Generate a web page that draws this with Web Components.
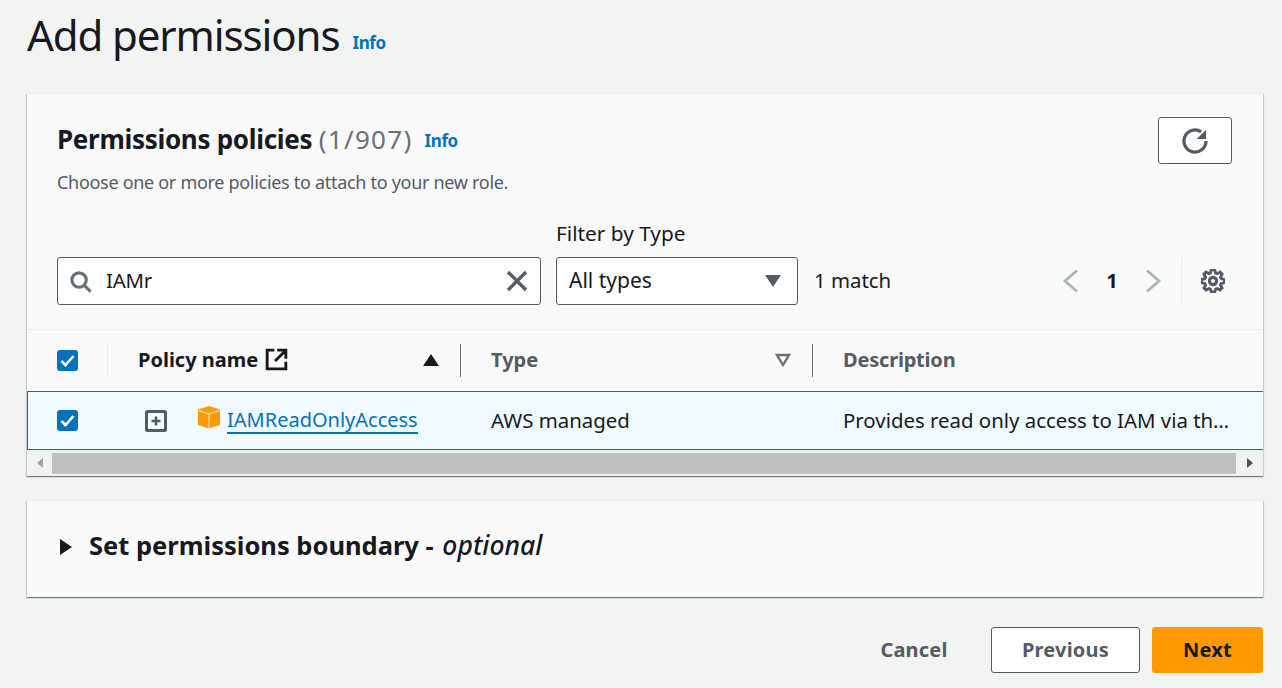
<!DOCTYPE html>
<html>
<head>
<meta charset="utf-8">
<title>Add permissions</title>
<style>
  html, body { margin: 0; height: 100%; overflow: hidden; background: #f2f3f3; }
  body { font-family: "Noto Sans", "Liberation Sans", sans-serif; color: #16191f; }
</style>
</head>
<body>
<add-permissions-page></add-permissions-page>

<script>
const ICONS = {
  search: `<svg viewBox="0 0 16 16"><circle cx="7" cy="7" r="5"/><path d="M15 15l-4.500-4.500"/></svg>`,
  close: `<svg viewBox="0 0 16 16"><path d="M2 2l12 12M14 2L2 14"/></svg>`,
  refresh: `<svg viewBox="0 0 16 16"><path d="M14.800 8a6.800 6.800 0 1 1-3-5.600"/><path d="M14.800 1v5.800H9z" fill="#545b64" stroke="none"/></svg>`,
  settings: `<svg viewBox="0 0 16 16"><path d="M13.300 5.200l1.100-2.100L13 1.700l-2.100 1.100-1-.4L9.100 0H6.900l-.8 2.300-1 .4L3 1.700 1.600 3.100l1.100 2.100-.4 1L0 6.900v2.200l2.300.8.4 1L1.600 13 3 14.400l2.100-1.100 1 .4.8 2.300h2.200l.8-2.300 1-.4 2.100 1.100 1.400-1.400-1.100-2.100.4-1 2.300-.8V6.900l-2.300-.8z" transform="translate(.5 .5) scale(.94)"/><circle cx="8" cy="8" r="2.400"/></svg>`,
  left: `<svg viewBox="0 0 16 16"><path d="M12 1L4 8l8 7"/></svg>`,
  right: `<svg viewBox="0 0 16 16"><path d="M4 1l8 7-8 7"/></svg>`,
  external: `<svg viewBox="0 0 16 16"><path d="M6.500 1.500h-5v13h13v-5"/><path d="M8.500 1.500h6v6M14.500 1.500L7 9"/></svg>`,
};

class InfoLink extends HTMLElement {
  connectedCallback() {
    this.attachShadow({ mode: "open" }).innerHTML = `
      <style>
        :host { display: inline-block; color: #0073bb; font-size: 17px; line-height: 22px; font-weight: 700; letter-spacing: -.4px; }
      </style>
      <slot></slot>`;
  }
}
customElements.define("info-link", InfoLink);

class CheckBox extends HTMLElement {
  connectedCallback() {
    this.attachShadow({ mode: "open" }).innerHTML = `
      <style>
        :host { display: block; width: 21px; height: 21px; background: #0073bb; border-radius: 3px; }
        svg { display: block; width: 21px; height: 21px; fill: none; stroke: #fff; stroke-width: 2.600; }
      </style>
      <svg viewBox="0 0 21 21"><path d="M4.500 11l4 4 8-9"/></svg>`;
  }
}
customElements.define("check-box", CheckBox);

class ActionButton extends HTMLElement {
  connectedCallback() {
    this.attachShadow({ mode: "open" }).innerHTML = `
      <style>
        :host {
          display: flex; align-items: center; justify-content: center; box-sizing: border-box;
          height: 46px; padding-bottom: 2px; border-radius: 3px; font-size: 20px; font-weight: 700; letter-spacing: .2px;
          color: #545b64; border: 1px solid transparent;
        }
        :host([variant="normal"]) { width: 149px; background: #fff; border-color: #545b64; }
        :host([variant="link"]) { width: 130px; }
        :host([variant="primary"]) { width: 111px; background: #ff9900; border-color: #ff9900; color: #16191f; }
      </style>
      <slot></slot>`;
  }
}
customElements.define("action-button", ActionButton);

class FilterBar extends HTMLElement {
  connectedCallback() {
    this.attachShadow({ mode: "open" }).innerHTML = `
      <style>
        :host { display: flex; align-items: flex-end; padding: 0 0 0 30px; height: 100px; font-size: 20.400px; }
        svg { display: block; fill: none; stroke: #545b64; stroke-width: 2; }
        .box {
          box-sizing: border-box; height: 48px; background: #fff; border: 1px solid #545b64; border-radius: 3px;
          display: flex; align-items: center;
        }
        .search { width: 484px; padding: 0 11px 0 11px; }
        .search .lens { width: 23px; height: 23px; }
        .search .lens svg { stroke: #687078; stroke-width: 2.200; }
        .search .text { flex: 1; margin-left: 14px; letter-spacing: -.2px; padding-bottom: 2px; }
        .search .clear { width: 24px; height: 24px; }
        .search .clear svg { stroke-width: 2.200; }
        .type { margin-left: 15px; display: flex; flex-direction: column; }
        .type label { line-height: 24px; margin-bottom: 12px; font-size: 20.800px; }
        .select { width: 242px; padding: 0 16px 0 12px; justify-content: space-between; font-size: 21px; }
        .select .value { padding-bottom: 2px; }
        .caret { width: 0; height: 0; border-left: 8px solid transparent; border-right: 8px solid transparent; border-top: 12px solid #545b64; }
        .count { margin-left: 16px; height: 48px; line-height: 46px; }
        .pager { margin-left: auto; margin-right: 38px; display: flex; align-items: center; height: 48px; }
        .pager > svg { width: 24px; height: 24px; stroke: #aab7b8; stroke-width: 1.900; }
        .pager b { width: 58px; text-align: center; font-size: 20px; font-weight: 700; padding-bottom: 2px; }
        .pager i { display: block; width: 1px; height: 48px; background: #eaeded; margin: 0 19px 0 16px; }
        .gear { display: block; width: 24px; height: 24px; }
        .gear svg { stroke-width: 2.100; }
      </style>
      <div class="box search">
        <span class="lens">${ICONS.search}</span>
        <span class="text">IAMr</span>
        <span class="clear">${ICONS.close}</span>
      </div>
      <div class="type">
        <label>Filter by Type</label>
        <div class="box select"><span class="value">All types</span><span class="caret"></span></div>
      </div>
      <div class="count">1 match</div>
      <div class="pager">
        ${ICONS.left}<b>1</b>${ICONS.right}<i></i><span class="gear">${ICONS.settings}</span>
      </div>`;
  }
}
customElements.define("filter-bar", FilterBar);

class PolicyTable extends HTMLElement {
  connectedCallback() {
    this.attachShadow({ mode: "open" }).innerHTML = `
      <style>
        :host { display: block; font-size: 20.400px; }
        .head { display: grid; grid-template-columns: 81px 353px 352px 1fr; height: 61px; border-top: 1px solid #eaeded; border-bottom: 1px solid #d5dbdb; }
        .cell { display: flex; align-items: center; position: relative; padding-left: 30px; min-width: 0; }
        .head .cell { font-weight: 700; color: #545b64; font-size: 20px; padding-bottom: 2px; }
        .head .cell.sorted { color: #16191f; }
        .head .cell.narrow { letter-spacing: -.2px; }
        .head .cell:not(:first-child)::before {
          content: ""; position: absolute; left: -1px; top: 14px; height: 33px; width: 1px; background: #687078;
        }
        .head .cell:nth-child(2)::before { background: #eaeded; }
        .head .cell.check { padding-bottom: 0; }
        .ext { width: 23px; height: 23px; margin-left: 7px; }
        .ext svg { display: block; fill: none; stroke: #16191f; stroke-width: 2; }
        .sort { position: absolute; right: 22px; top: 24px; }
        .asc { border-left: 8px solid transparent; border-right: 8px solid transparent; border-bottom: 12px solid #16191f; width: 0; height: 0; }
        .desc { top: 23px; width: 16px; height: 14px; }
        .desc svg { display: block; fill: none; stroke: #687078; stroke-width: 2.400; }
        .row { display: grid; grid-template-columns: 80px 353px 352px 1fr; height: 57px; background: #f1faff; border: 1px solid #0073bb; border-right: 0; margin-top: -1px; position: relative; white-space: nowrap; }
        .row .cell.text { padding-bottom: 2px; }
        .row .cell.check { padding-left: 29px; }
        .expand { width: 22px; height: 22px; margin-left: 7px; flex: none; }
        .expand svg { display: block; }
        .cube { width: 24px; height: 24px; margin: -8px 6px 0 30px; flex: none; }
        .cube svg { display: block; }
        a { color: #0073bb; border-bottom: 2px solid #0073bb; line-height: 23px; text-decoration: none; padding: 1px 0; font-size: 20px; }
        .scroll { height: 26px; background: #f1f1f1; display: flex; align-items: center; }
        .arrow { width: 25px; display: flex; justify-content: center; }
        .arrow.r { width: 27px; }
        .arrow span { width: 0; height: 0; border-top: 5px solid transparent; border-bottom: 5px solid transparent; }
        .arrow.l span { border-right: 6px solid #a3a3a3; }
        .arrow.r span { border-left: 6px solid #505050; }
        .thumb { flex: 1; height: 21px; background: #c1c1c1; }
      </style>
      <div class="head">
        <div class="cell check"><check-box></check-box></div>
        <div class="cell sorted">Policy name<span class="ext">${ICONS.external}</span><span class="sort asc"></span></div>
        <div class="cell">Type<span class="sort desc"><svg viewBox="0 0 16 14"><path d="M2 2h12L8 12z"/></svg></span></div>
        <div class="cell narrow">Description</div>
      </div>
      <div class="row">
        <div class="cell check"><check-box></check-box></div>
        <div class="cell">
          <span class="expand"><svg viewBox="0 0 22 22" width="22" height="22" fill="none" stroke="#545b64"><rect x="1.500" y="1.500" width="19" height="19" rx="1" stroke-width="3"/><path d="M11 6.500v9M6.500 11h9" stroke-width="2.600"/></svg></span>
          <span class="cube"><svg viewBox="0 0 24 24" width="24" height="24"><path d="M12 1l11 3.500V20l-11 3.500L1 20V4.500z" fill="#ff9900"/><path d="M1.500 5.500L12 9l10.500-3.500M12 9v14.500" fill="none" stroke="#ffd699" stroke-width="1.400"/></svg></span>
          <a>IAMReadOnlyAccess</a>
        </div>
        <div class="cell text">AWS managed</div>
        <div class="cell text">Provides read only access to IAM via th…</div>
      </div>
      <div class="scroll">
        <div class="arrow l"><span></span></div>
        <div class="thumb"></div>
        <div class="arrow r"><span></span></div>
      </div>`;
  }
}
customElements.define("policy-table", PolicyTable);

class PermissionsPanel extends HTMLElement {
  connectedCallback() {
    this.attachShadow({ mode: "open" }).innerHTML = `
      <style>
        :host { display: block; background: #fafafa; border-top: 1px solid #eaeded; box-shadow: 0 1px 1px 0 rgba(0,28,36,.4), 1px 1px 1px 0 rgba(0,28,36,.12), -1px 1px 1px 0 rgba(0,28,36,.12); }
        header { display: flex; justify-content: space-between; padding: 23px 31px 0 30px; height: 111px; box-sizing: border-box; }
        h2 { margin: 0; display: flex; align-items: center; gap: 12px; font-size: 26px; line-height: 44px; font-weight: 700; letter-spacing: -.3px; }
        h2 span span { font-weight: 400; color: #687078; letter-spacing: 1.300px; }
        h2 info-link { margin-top: 4px; }
        p { margin: 0; font-size: 18px; color: #545b64; line-height: 22px; margin-top: 10px; letter-spacing: -.3px; }
        .refresh { box-sizing: border-box; width: 74px; height: 47px; background: #fff; border: 1px solid #545b64; border-radius: 3px; display: flex; align-items: center; justify-content: center; }
        .refresh svg { display: block; width: 26px; height: 26px; fill: none; stroke: #545b64; stroke-width: 2; }
      </style>
      <header>
        <div>
          <h2><span>Permissions policies <span>(1/907)</span></span><info-link>Info</info-link></h2>
          <p>Choose one or more policies to attach to your new role.</p>
        </div>
        <div class="refresh">${ICONS.refresh}</div>
      </header>
      <filter-bar></filter-bar>
      <div style="height:24px"></div>
      <policy-table></policy-table>`;
  }
}
customElements.define("permissions-panel", PermissionsPanel);

class BoundaryPanel extends HTMLElement {
  connectedCallback() {
    this.attachShadow({ mode: "open" }).innerHTML = `
      <style>
        :host {
          display: flex; align-items: center; height: 97px; background: #fafafa; border-top: 1px solid #eaeded; box-sizing: border-box;
          box-shadow: 0 1px 1px 0 rgba(0,28,36,.4), 1px 1px 1px 0 rgba(0,28,36,.12), -1px 1px 1px 0 rgba(0,28,36,.12);
          padding: 0 0 5px 33px; font-size: 25.500px; font-weight: 700;
        }
        .tri { width: 0; height: 0; border-top: 8px solid transparent; border-bottom: 8px solid transparent; border-left: 12px solid #16191f; margin-right: 17px; }
        .label { padding-bottom: 3px; }
        em { font-weight: 500; font-size: 26.500px; margin-left: 2px; }
      </style>
      <span class="tri"></span><span class="label">Set permissions boundary - <em>optional</em></span>`;
  }
}
customElements.define("boundary-panel", BoundaryPanel);

class AddPermissionsPage extends HTMLElement {
  connectedCallback() {
    this.attachShadow({ mode: "open" }).innerHTML = `
      <style>
        :host { display: block; padding: 0 19px 0 27px; }
        .title { display: flex; align-items: flex-start; height: 93px; padding-top: 7px; box-sizing: border-box; gap: 13px; }
        .title info-link { margin-top: 25px; }
        h1 { margin: 0; font-size: 42px; font-weight: 400; line-height: 56px; letter-spacing: -1.100px; }
        boundary-panel { margin-top: 24px; }
        footer { display: flex; justify-content: flex-end; align-items: center; margin-top: 30px; gap: 12px; }
      </style>
      <div class="title"><h1>Add permissions</h1><info-link>Info</info-link></div>
      <permissions-panel></permissions-panel>
      <boundary-panel></boundary-panel>
      <footer>
        <action-button variant="link">Cancel</action-button>
        <action-button variant="normal">Previous</action-button>
        <action-button variant="primary">Next</action-button>
      </footer>`;
  }
}
customElements.define("add-permissions-page", AddPermissionsPage);
</script>
</body>
</html>
